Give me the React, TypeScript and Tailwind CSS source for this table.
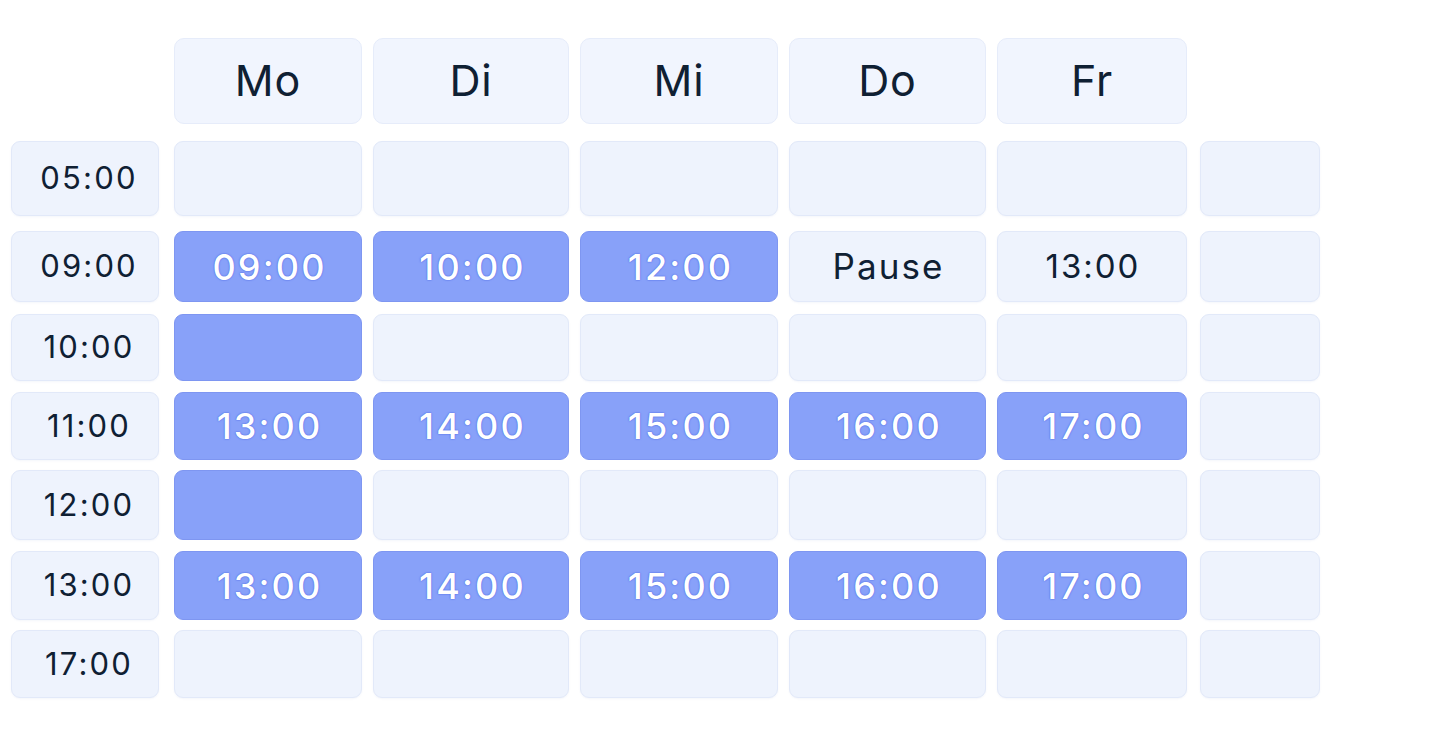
import React from "react";

type Cell = { t?: string; blue?: boolean };

const COLS = "grid grid-cols-[152px_188px_196px_198px_197px_192px_120px] gap-x-[11px]";

const rows: { time: string; mt: string; h: string; cells: Cell[] }[] = [
  { time: "05:00", mt: "mt-[17px]", h: "h-[75px]", cells: [{}, {}, {}, {}, {}] },
  {
    time: "09:00",
    mt: "mt-[15px]",
    h: "h-[71px]",
    cells: [
      { t: "09:00", blue: true },
      { t: "10:00", blue: true },
      { t: "12:00", blue: true },
      { t: "Pause" },
      { t: "13:00" },
    ],
  },
  { time: "10:00", mt: "mt-[12px]", h: "h-[67px]", cells: [{ blue: true }, {}, {}, {}, {}] },
  {
    time: "11:00",
    mt: "mt-[11px]",
    h: "h-[68px]",
    cells: [
      { t: "13:00", blue: true },
      { t: "14:00", blue: true },
      { t: "15:00", blue: true },
      { t: "16:00", blue: true },
      { t: "17:00", blue: true },
    ],
  },
  { time: "12:00", mt: "mt-[10px]", h: "h-[70px]", cells: [{ blue: true }, {}, {}, {}, {}] },
  {
    time: "13:00",
    mt: "mt-[11px]",
    h: "h-[69px]",
    cells: [
      { t: "13:00", blue: true },
      { t: "14:00", blue: true },
      { t: "15:00", blue: true },
      { t: "16:00", blue: true },
      { t: "17:00", blue: true },
    ],
  },
  { time: "17:00", mt: "mt-[10px]", h: "h-[68px]", cells: [{}, {}, {}, {}, {}] },
];

const light =
  "rounded-[9px] bg-[#eef3fd] border border-[#e2e9f9] shadow-[0_1px_2px_rgba(120,140,200,0.08)]";
const blue = "rounded-[9px] bg-[#88a1f9] border border-[#7e96f1]";

export default function App() {
  return (
    <div
      className="w-[1432px] h-[747px] bg-white text-[#0f2033] overflow-hidden"
      style={{ fontFamily: "Inter, 'Open Sans', sans-serif" }}
    >
      <div className="pl-[11px] pt-[38px] flex flex-col">
        <div className={`${COLS} h-[86px]`}>
          <div />
          {["Mo", "Di", "Mi", "Do", "Fr"].map((d, i) => (
            <div
              key={d}
              className={`rounded-[10px] bg-[#f1f5fe] border border-[#e6ecfa] flex items-center justify-center text-[43px] tracking-[0.02em] pb-[2px] ${
                i === 4 ? "mr-[2px]" : ""
              }`}
            >
              {d}
            </div>
          ))}
          <div />
        </div>
        {rows.map((r) => (
          <div key={r.time + r.mt} className={`${COLS} ${r.mt} ${r.h}`}>
            <div
              className={`${light} mr-[4px] flex items-center justify-center text-[31px] tracking-[0.07em] pl-[8px]`}
            >
              {r.time}
            </div>
            {r.cells.map((c, i) => (
              <div
                key={i}
                className={`${c.blue ? blue : light} ${i === 4 ? "mr-[2px]" : ""} flex items-center justify-center ${
                  c.blue
                    ? "text-white font-medium text-[36px] tracking-[0.06em] pl-[3px] [text-shadow:0_0_2px_#4f6be6,0_0_1px_#4f6be6]"
                    : c.t === "Pause"
                    ? "text-[35px] tracking-[0.06em] pl-[2px]"
                    : "text-[33px] tracking-[0.06em] pl-[2px]"
                }`}
              >
                {c.t}
              </div>
            ))}
            <div className={light} />
          </div>
        ))}
      </div>
    </div>
  );
}
